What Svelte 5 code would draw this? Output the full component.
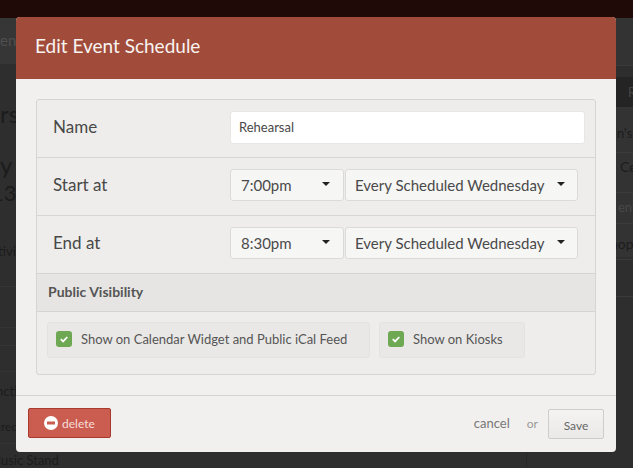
<script>
  let name = $state("Rehearsal");
  let calendar = $state(true);
  let kiosks = $state(true);
</script>

<div class="page">
  <div class="topbar"></div>

  <div class="behind left">
    <div class="band"></div>
    <div class="line l1"></div>
    <div class="line l2"></div>
    <div class="line l3"></div>
    <div class="line l4"></div>
    <div class="line l5"></div>
    <span class="b1">en</span>
    <span class="b2">rs</span>
    <span class="b3">y</span>
    <span class="b4">13</span>
    <span class="b5">tivi</span>
    <span class="b6">ncti</span>
    <span class="b7">irec</span>
    <span class="b8">Music Stand</span>
  </div>
  <div class="behind right">
    <div class="band-r"></div>
    <div class="table-head"></div>
    <div class="table-rows"></div>
    <div class="line-r m1"></div>
    <div class="line-r m2"></div>
    <div class="line-r m3"></div>
    <div class="line-r m4"></div>
    <div class="line-r m5"></div>
    <div class="line-r m6"></div>
    <div class="edge"></div>
    <span class="r1">R</span>
    <span class="r2">n's l</span>
    <span class="r3">Ce</span>
    <span class="r4">ent</span>
    <span class="r5">hop</span>
  </div>

  <div class="modal">
    <div class="modal-header">Edit Event Schedule</div>

    <div class="modal-body">
      <div class="panel">
        <div class="row">
          <span class="label">Name</span>
          <input class="text-input" type="text" bind:value={name} />
        </div>
        <div class="row">
          <span class="label">Start at</span>
          <div class="selects">
            <button class="select time">7:00pm <i class="caret"></i></button>
            <button class="select recur">Every Scheduled Wednesday <i class="caret"></i></button>
          </div>
        </div>
        <div class="row">
          <span class="label">End at</span>
          <div class="selects">
            <button class="select time">8:30pm <i class="caret"></i></button>
            <button class="select recur">Every Scheduled Wednesday <i class="caret"></i></button>
          </div>
        </div>
        <div class="section-title">Public Visibility</div>
        <div class="checks">
          <label class="check first">
            <input type="checkbox" bind:checked={calendar} />
            <span class="box">
              <svg viewBox="0 0 16 16" width="16" height="16"><path d="M4.8 8.2l2.3 2.2 4.2-4.4" fill="none" stroke="#fff" stroke-width="1.8" /></svg>
            </span>
            Show on Calendar Widget and Public iCal Feed
          </label>
          <label class="check second">
            <input type="checkbox" bind:checked={kiosks} />
            <span class="box">
              <svg viewBox="0 0 16 16" width="16" height="16"><path d="M4.8 8.2l2.3 2.2 4.2-4.4" fill="none" stroke="#fff" stroke-width="1.8" /></svg>
            </span>
            Show on Kiosks
          </label>
        </div>
      </div>
    </div>

    <div class="modal-footer">
      <button class="delete">
        <svg viewBox="0 0 14 14" width="14" height="14">
          <circle cx="7" cy="7" r="7" fill="#fff" />
          <rect x="3" y="5.5" width="8" height="3" fill="#cb5d50" />
        </svg>
        delete
      </button>
      <div class="actions">
        <span class="cancel">cancel</span>
        <span class="or">or</span>
        <button class="save">Save</button>
      </div>
    </div>
  </div>
</div>

<style>
  :global(body) {
    margin: 0;
    background: #2c2c2c;
  }

  .page {
    position: relative;
    width: 633px;
    height: 468px;
    overflow: hidden;
    background: #2e2e2e;
    font-family: Lato, sans-serif;
  }

  .topbar {
    height: 18px;
    background: #200a08;
  }

  .behind span {
    position: absolute;
    color: #1c1c1c;
    font-size: 13px;
    white-space: nowrap;
  }

  .band {
    position: absolute;
    left: 0;
    top: 18px;
    width: 16px;
    height: 46px;
    background: #363636;
  }

  .line {
    position: absolute;
    left: 0;
    width: 16px;
    height: 1px;
    background: #353535;
  }

  .l1 { top: 286px; }
  .l2 { top: 327px; }
  .l3 { top: 345px; }
  .l4 { top: 371px; }
  .l5 { top: 443px; }

  .band-r {
    position: absolute;
    left: 616px;
    top: 18px;
    width: 17px;
    height: 47px;
    background: #333;
  }

  .table-head {
    position: absolute;
    left: 616px;
    top: 77px;
    width: 17px;
    height: 30px;
    background: #242424;
  }

  .table-rows {
    position: absolute;
    left: 616px;
    top: 107px;
    width: 17px;
    height: 150px;
    background: #333;
  }

  .line-r {
    position: absolute;
    left: 616px;
    width: 17px;
    height: 1px;
    background: #3b3b3b;
  }

  .m1 { top: 65px; }
  .m2 { top: 152px; }
  .m3 { top: 192px; }
  .m4 { top: 223px; }
  .m5 { top: 259px; }
  .m6 { top: 296px; }

  .edge {
    position: absolute;
    left: 526px;
    top: 452px;
    width: 1px;
    height: 16px;
    background: #272727;
  }

  .left .b1 { left: 0; top: 31px; font-size: 15px; color: #4e4e4e; }
  .left .b2 { left: 0; top: 99px; font-size: 24px; }
  .left .b3 { left: 0; top: 150px; font-size: 24px; }
  .left .b4 { left: -9px; top: 179px; font-size: 22px; }
  .left .b5 { left: -2px; top: 243px; }
  .left .b6 { left: -4px; top: 383px; }
  .left .b7 { left: -2px; top: 419px; font-size: 12px; }
  .left .b8 { left: -11px; top: 452px; }
  .right .r1 { left: 628px; top: 84px; color: #444; }
  .right .r2 { left: 617px; top: 125px; }
  .right .r3 { left: 620px; top: 158px; font-size: 14px; }
  .right .r4 { left: 618px; top: 199px; color: #484848; }
  .right .r5 { left: 610px; top: 235px; font-size: 14px; }

  .modal {
    position: absolute;
    left: 16px;
    top: 17px;
    width: 600px;
    height: 435px;
    display: flex;
    flex-direction: column;
    background: #f2f0ee;
    border-radius: 4px;
    overflow: hidden;
  }

  .modal-header {
    height: 62px;
    line-height: 58px;
    padding-left: 19px;
    background: #a14c3b;
    color: #f8f4f1;
    font-size: 19px;
  }

  .modal-body {
    flex: 1;
    padding: 20px 20px 0;
  }

  .panel {
    border: 1px solid #d8d4d0;
    border-radius: 3px;
    background: #eeedeb;
  }

  .row {
    box-sizing: border-box;
    display: flex;
    align-items: center;
    height: 58px;
    padding-bottom: 3px;
    border-bottom: 1px solid #d8d4d0;
  }

  .label {
    width: 177px;
    padding-left: 16px;
    color: #484848;
    font-size: 17px;
    line-height: 20px;
  }

  .text-input {
    box-sizing: border-box;
    width: 355px;
    height: 33px;
    padding: 0 8px;
    border: 1px solid #e8e6e3;
    border-radius: 3px;
    background: #fff;
    color: #484848;
    font: 13px Lato, sans-serif;
    outline: none;
  }

  .selects {
    display: flex;
  }

  .select {
    box-sizing: border-box;
    display: flex;
    align-items: center;
    justify-content: space-between;
    height: 32px;
    padding: 0 12px 0 10px;
    border: 1px solid #dcdad7;
    border-radius: 3px;
    background: #f6f6f5;
    color: #4a4a4a;
    font: 15px Lato, sans-serif;
  }

  .time { width: 114px; padding-right: 13px; }
  .recur { width: 233px; margin-left: 1px; padding-left: 9px; }

  .caret {
    width: 0;
    height: 0;
    margin-top: -2px;
    border-left: 4px solid transparent;
    border-right: 4px solid transparent;
    border-top: 4px solid #222;
  }

  .section-title {
    height: 37px;
    line-height: 36px;
    padding-left: 11px;
    background: #e6e5e3;
    border-bottom: 1px solid #d8d4d0;
    color: #555;
    font-size: 14px;
    font-weight: 700;
  }

  .checks {
    display: flex;
    gap: 9px;
    padding: 10px 10px 16px;
  }

  .check {
    box-sizing: border-box;
    display: flex;
    align-items: center;
    gap: 9px;
    height: 36px;
    padding: 0 0 2px 8px;
    border: 1px solid #e4e2e0;
    border-radius: 3px;
    background: #e9e8e6;
    color: #555;
    font-size: 13px;
  }

  .first { width: 323px; }
  .second { width: 146px; }

  .check input {
    display: none;
  }

  .box {
    display: flex;
    align-items: center;
    justify-content: center;
    width: 16px;
    height: 16px;
    border-radius: 3px;
    background: #6fa852;
  }

  .modal-footer {
    display: flex;
    align-items: center;
    justify-content: space-between;
    height: 56px;
    padding: 0 12px;
    border-top: 1px solid #d5d3d0;
  }

  .delete {
    display: flex;
    align-items: center;
    gap: 4px;
    box-sizing: border-box;
    width: 83px;
    height: 30px;
    margin-bottom: 2px;
    padding: 0 0 0 15px;
    border: 1px solid #a8392c;
    border-radius: 2px;
    background: #cb5d50;
    color: #f7dedb;
    font: 12px Lato, sans-serif;
  }

  .actions {
    display: flex;
    align-items: center;
  }

  .cancel {
    margin-bottom: 2px;
    color: #777;
    font-size: 13px;
  }

  .or {
    margin: 0 10px 2px 17px;
    color: #999;
    font-size: 12px;
  }

  .save {
    box-sizing: border-box;
    width: 56px;
    height: 30px;
    padding-top: 3px;
    border: 1px solid #cfcdca;
    border-radius: 2px;
    background: linear-gradient(#f4f3f1, #eae9e7);
    color: #666;
    font: 12px Lato, sans-serif;
  }
</style>
